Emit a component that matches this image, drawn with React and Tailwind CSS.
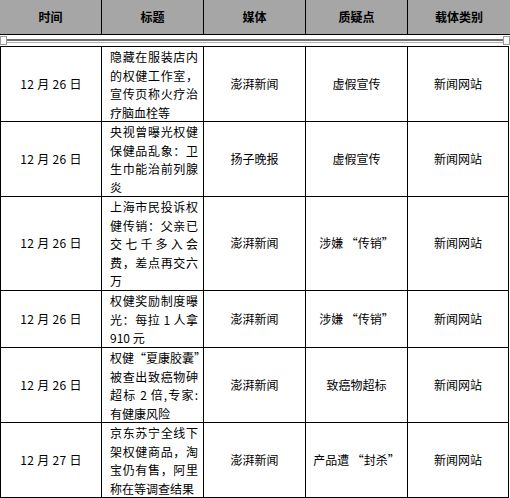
import React from "react";

const rows = [
  {
    date: "12 月 26 日",
    title: ["隐藏在服装店内", "的权健工作室，", "宣传页称火疗治", "疗脑血栓等"],
    media: "澎湃新闻",
    point: "虚假宣传",
    type: "新闻网站",
    h: "h-[75px]",
  },
  {
    date: "12 月 26 日",
    title: ["央视曾曝光权健", "保健品乱象：卫", "生巾能治前列腺", "炎"],
    media: "扬子晚报",
    point: "虚假宣传",
    type: "新闻网站",
    h: "h-[75px]",
  },
  {
    date: "12 月 26 日",
    title: ["上海市民投诉权", "健传销：父亲已", "交七千多入会", "费，差点再交六", "万"],
    media: "澎湃新闻",
    point: "涉嫌 “传销”",
    type: "新闻网站",
    h: "h-[94px]",
  },
  {
    date: "12 月 26 日",
    title: ["权健奖励制度曝", "光：每拉 1 人拿", "910 元"],
    media: "澎湃新闻",
    point: "涉嫌 “传销”",
    type: "新闻网站",
    h: "h-[57px]",
  },
  {
    date: "12 月 26 日",
    title: ["权健“夏康胶囊”", "被查出致癌物砷", "超标 2 倍,专家:", "有健康风险"],
    media: "澎湃新闻",
    point: "致癌物超标",
    type: "新闻网站",
    h: "h-[75px]",
  },
  {
    date: "12 月 27 日",
    title: ["京东苏宁全线下", "架权健商品，淘", "宝仍有售，阿里", "称在等调查结果"],
    media: "澎湃新闻",
    point: "产品遭 “封杀”",
    type: "新闻网站",
    h: "h-[75px]",
  },
];

function Center({ children }) {
  return (
    <div className="flex items-center justify-center border-r border-b border-black">
      {children}
    </div>
  );
}

export default function App() {
  return (
    <div className="w-[510px] h-[498px] bg-white overflow-hidden font-['Noto_Sans_CJK_SC',sans-serif] text-[12px] text-black leading-[18.5px]">
      {/* header */}
      <div className="grid grid-cols-[102px_102px_102px_102px_102px] h-[35px] bg-[#a6a6a6] border-b border-black font-bold">
        {["时间", "标题", "媒体", "质疑点", "载体类别"].map((t, i) => (
          <div
            key={t}
            className={
              "flex items-center justify-center " +
              (i < 4 ? "border-r border-black" : "")
            }
          >
            {t}
          </div>
        ))}
      </div>

      {/* gap with double line */}
      <div className="h-[11px] flex items-start pt-px">
        <div className="w-[7px] h-[9px] border border-[#9a9a9a]" />
        <div className="flex-1 flex flex-col pt-[3px]">
          <div className="h-[2px] bg-[#6e6e6e]" />
          <div className="h-px mt-px bg-[#b0b0b0]" />
        </div>
        <div className="w-[7px] h-[9px] border border-[#9a9a9a]" />
      </div>

      {/* body */}
      <div className="w-[509px] border-l border-t border-black grid grid-cols-[101px_102px_102px_102px_101px]">
        {rows.map((r, idx) => (
          <React.Fragment key={idx}>
            <div className={"flex items-center justify-center border-r border-b border-black tracking-[0.3px] " + r.h}>
              {r.date}
            </div>
            <div className={"border-r border-b border-black pl-2 pr-[5px] pt-px " + r.h}>
              {r.title.map((line, li) => (
                <div
                  key={li}
                  className={
                    "whitespace-nowrap h-[18.5px] " +
                    (li < r.title.length - 1
                      ? "text-justify [text-align-last:justify]"
                      : "text-left")
                  }
                >
                  {line}
                </div>
              ))}
            </div>
            <Center>{r.media}</Center>
            <Center>{r.point}</Center>
            <Center>{r.type}</Center>
          </React.Fragment>
        ))}
      </div>
    </div>
  );
}
